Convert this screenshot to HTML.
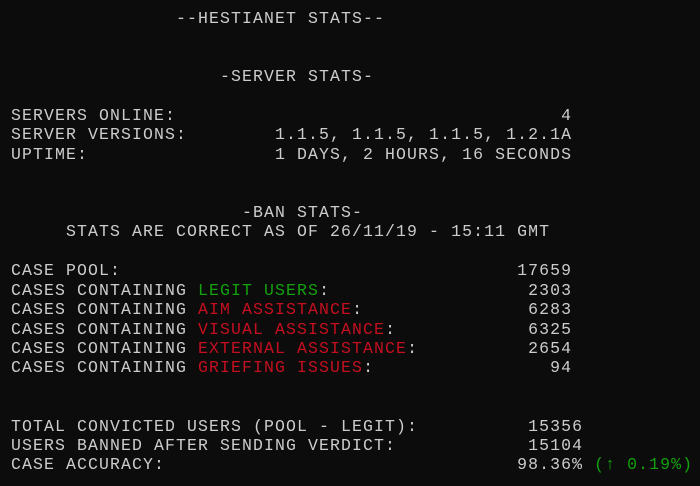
<!DOCTYPE html>
<html><head><meta charset="utf-8"><style>
html,body{margin:0;padding:0;background:#0c0c0c;width:700px;height:486px;overflow:hidden}
pre{margin:0;position:absolute;left:11px;top:9px;font-family:"Liberation Mono","DejaVu Sans Mono",monospace;font-size:16.5px;letter-spacing:1.1px;line-height:19.4px;color:#cccccc}
.g{color:#13a10e}.r{color:#c50f1f}
</style></head><body><pre>               --HESTIANET STATS--


                   -SERVER STATS-

SERVERS ONLINE:                                   4
SERVER VERSIONS:        1.1.5, 1.1.5, 1.1.5, 1.2.1A
UPTIME:                 1 DAYS, 2 HOURS, 16 SECONDS


                     -BAN STATS-
     STATS ARE CORRECT AS OF 26/11/19 - 15:11 GMT

CASE POOL:                                    17659
CASES CONTAINING <span class="g">LEGIT USERS</span>:                  2303
CASES CONTAINING <span class="r">AIM ASSISTANCE</span>:               6283
CASES CONTAINING <span class="r">VISUAL ASSISTANCE</span>:            6325
CASES CONTAINING <span class="r">EXTERNAL ASSISTANCE</span>:          2654
CASES CONTAINING <span class="r">GRIEFING ISSUES</span>:                94


TOTAL CONVICTED USERS (POOL - LEGIT):          15356
USERS BANNED AFTER SENDING VERDICT:            15104
CASE ACCURACY:                                98.36% <span class="g">(↑ 0.19%)</span></pre></body></html>
